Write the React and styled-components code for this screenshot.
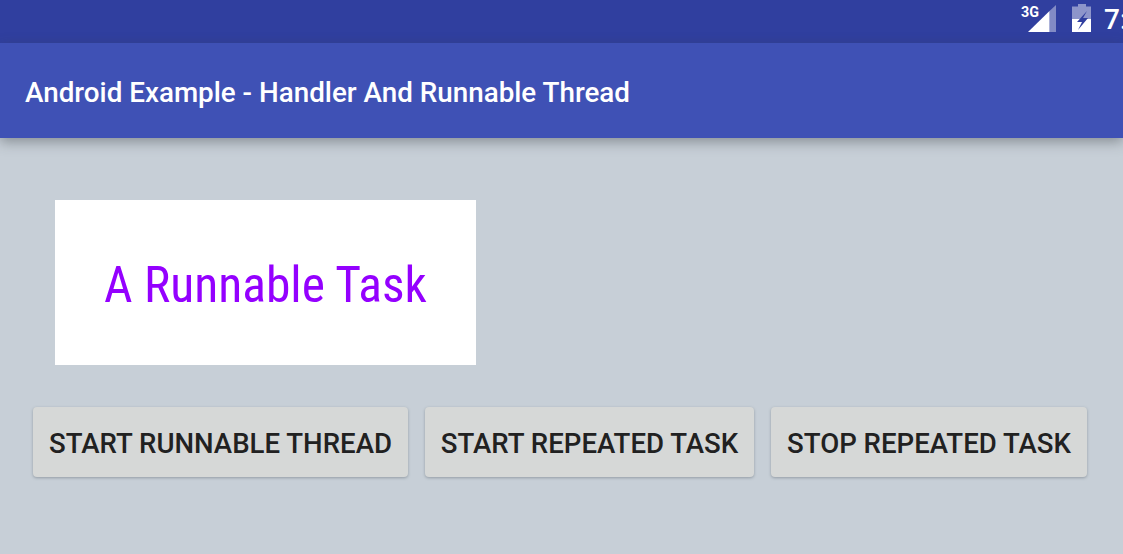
import React from 'react';
import styled, { createGlobalStyle } from 'styled-components';

const GlobalStyle = createGlobalStyle`
  html, body {
    margin: 0;
    padding: 0;
    overflow: hidden;
  }
  body {
    font-family: Roboto, "Liberation Sans", sans-serif;
  }
`;

const Screen = styled.div`
  width: 1123px;
  height: 554px;
  overflow: hidden;
  display: flex;
  flex-direction: column;
  background-color: #c7cfd7;
`;

const StatusBar = styled.div`
  height: 43px;
  flex: none;
  display: flex;
  align-items: flex-start;
  padding-left: 1020px;
  background-color: #303f9f;
  overflow: hidden;
`;

const SignalIcon = styled.svg`
  width: 38px;
  height: 34px;
  flex: none;
`;

const BatteryIcon = styled.svg`
  width: 22px;
  height: 34px;
  flex: none;
  margin-left: 13px;
`;

const Clock = styled.span`
  flex: none;
  margin-left: 11px;
  margin-top: 3px;
  color: #fff;
  font-size: 28px;
  line-height: 33px;
  font-weight: 500;
`;

const AppBar = styled.header`
  height: 95px;
  flex: none;
  display: flex;
  align-items: center;
  padding-left: 25px;
  background-color: #3f51b5;
  box-shadow: 0 4px 12px rgba(60, 66, 70, 0.45);
  position: relative;
`;

const Title = styled.h1`
  margin: 5px 0 0;
  color: #fff;
  font-size: 27.8px;
  font-weight: 500;
  line-height: 1;
`;

const Content = styled.main`
  flex: 1;
  padding: 62px 36px 0 33px;
`;

const Card = styled.div`
  width: 421px;
  height: 165px;
  margin-left: 22px;
  display: flex;
  align-items: center;
  justify-content: center;
  background-color: #fff;
`;

const CardText = styled.span`
  color: #9400ff;
  font-size: 49.5px;
  font-stretch: condensed;
  white-space: nowrap;
  margin-top: 4px;
`;

const ButtonRow = styled.div`
  display: flex;
  gap: 17px;
  margin-top: 42px;
`;

const ActionButton = styled.button`
  width: ${props => props.$width}px;
  height: 70px;
  padding: 2px 0 0;
  border: none;
  border-radius: 4px;
  background-color: #d6d8d7;
  box-shadow: 0 1px 3px rgba(70, 80, 90, 0.4);
  color: #212121;
  font-family: inherit;
  font-size: 27.6px;
  font-weight: 500;
  white-space: nowrap;
`;

const App = () => (
  <>
    <GlobalStyle />
    <Screen>
      <StatusBar>
        <SignalIcon viewBox="0 0 38 34">
          <text x="1" y="16.5" fill="#fff" fontSize="15" fontWeight="700" fontFamily="Roboto, sans-serif" textLength="18" lengthAdjust="spacingAndGlyphs">3G</text>
          <polygon points="36,5 36,32 29.5,32 29.5,11" fill="#fff" fillOpacity="0.4" />
          <polygon points="29.5,11 29.5,32 8,32" fill="#fff" />
        </SignalIcon>
        <BatteryIcon viewBox="0 0 22 34">
          <path d="M7 4h8v2.5h5V32H1V6.500h6z" fill="#fff" fillOpacity="0.45" />
          <path d="M1 19h19v13H1z" fill="#fff" />
          <path d="M16 11l-10 11h5l-4 8 10-12h-5l4-7z" fill="#303f9f" />
        </BatteryIcon>
        <Clock>7:</Clock>
      </StatusBar>
      <AppBar>
        <Title>Android Example - Handler And Runnable Thread</Title>
      </AppBar>
      <Content>
        <Card>
          <CardText>A Runnable Task</CardText>
        </Card>
        <ButtonRow>
          <ActionButton $width={375}>START RUNNABLE THREAD</ActionButton>
          <ActionButton $width={329}>START REPEATED TASK</ActionButton>
          <ActionButton $width={316}>STOP REPEATED TASK</ActionButton>
        </ButtonRow>
      </Content>
    </Screen>
  </>
);

export default App;
